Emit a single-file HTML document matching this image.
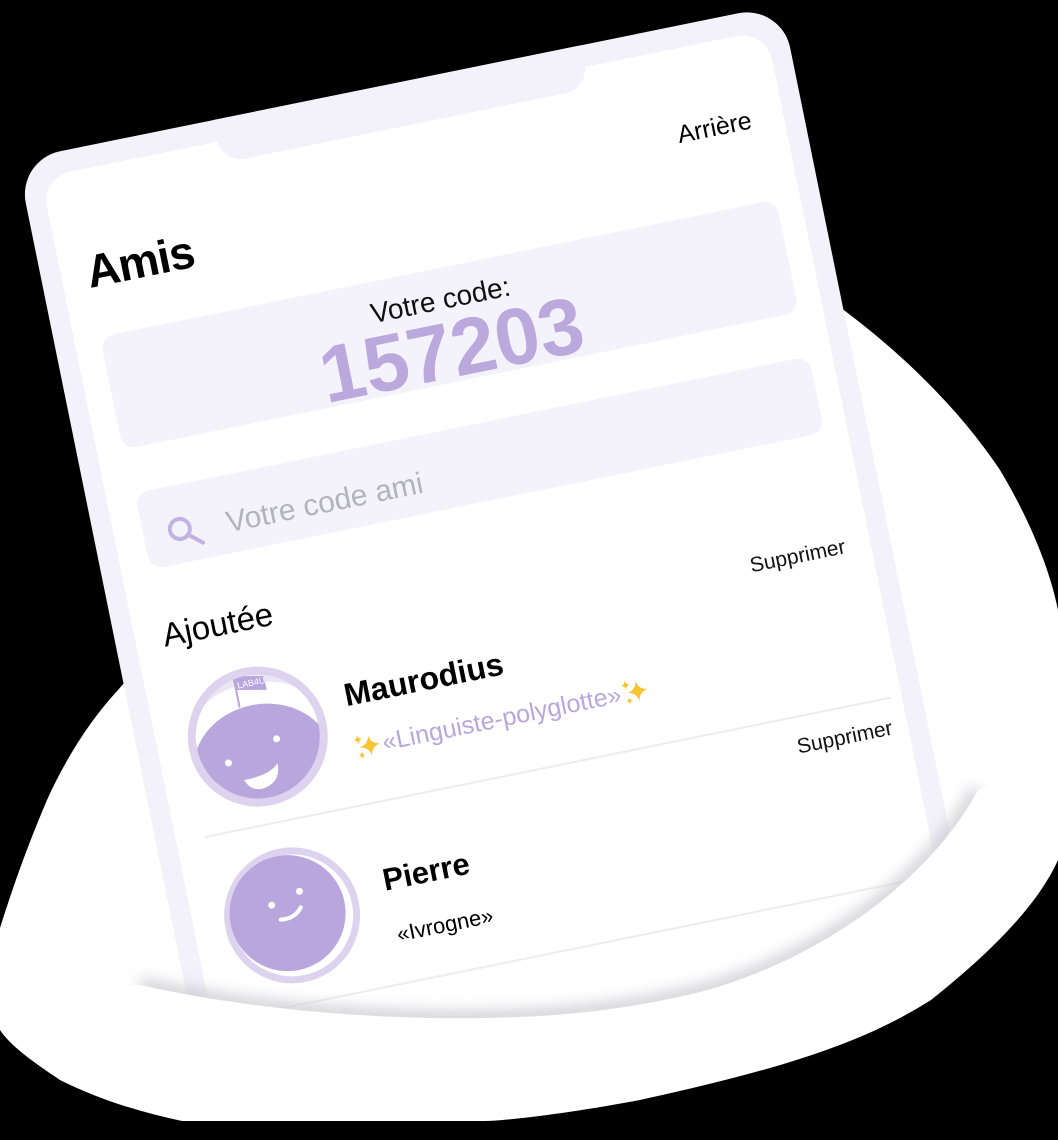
<!DOCTYPE html>
<html><head><meta charset="utf-8">
<style>
html,body{margin:0;padding:0;}
body{width:1058px;height:1121px;background:#000;position:relative;overflow:hidden;font-family:"Liberation Sans",sans-serif;}
#bg{position:absolute;left:0;top:0;}
#clip{position:absolute;left:0;top:0;width:1058px;height:1121px;
 clip-path:path("M0 0 H1058 V760 L978 790 C930 880 820 960 700 992 C600 1016 520 1019 430 1018 C330 1016 230 1005 140 985 L0 985 Z");}
#phone{position:absolute;left:17px;top:160px;width:780px;height:1000px;transform-origin:0 0;transform:rotate(-11.5deg);background:#f3f1fa;border-radius:44px;}
#screen{position:absolute;left:20px;top:22px;width:740px;height:960px;background:#fff;border-radius:30px;}
#notch{position:absolute;left:200px;top:0;width:375px;height:44px;background:#f3f1fa;border-radius:0 0 24px 24px;}
.a{position:absolute;white-space:nowrap;line-height:1;}
.c{transform:translate(-50%,-50%);}
.l{transform:translateY(-50%);}
.box{position:absolute;background:#f4f2fb;border-radius:14px;}
.line{position:absolute;height:1.5px;background:#ececf1;}
</style></head><body>
<svg id="bg" width="1058" height="1121" viewBox="0 0 1058 1121">
<path fill="#fff" d="M300 480 L700 300 L830 300 C900 350 960 410 1000 470 C1030 520 1050 570 1058 610 L1058 860 C1040 900 1000 945 931 1000 C860 1045 776 1070 640 1100 C560 1115 500 1121 486 1121 L182 1121 C140 1112 100 1100 60 1080 C30 1060 10 1045 0 1030 L0 928 C15 880 30 840 47 800 C65 760 90 720 118 690 Z"/>
</svg>
<div id="clip">
<div id="phone">
 <div id="screen"></div>
 <div id="notch"></div>
 <div class="a c" style="left:690px;top:108px;font-size:25px;color:#000;">Arrière</div>
 <div class="a l" style="left:46px;top:124px;font-size:46px;font-weight:900;color:#000;letter-spacing:-1px;">Amis</div>
 <div class="box" style="left:46px;top:190px;width:690px;height:115px;"></div>
 <div class="a c" style="left:387px;top:222px;font-size:28px;color:#111;">Votre code:</div>
 <div class="a c" style="left:388px;top:273px;font-size:80px;font-weight:700;color:#bba9dd;">157203</div>
 <div class="box" style="left:49px;top:350px;width:688px;height:78px;"></div>
 <svg class="a" style="left:70px;top:377px;" width="42" height="42" viewBox="0 0 42 42"><circle cx="16" cy="17" r="10" fill="none" stroke="#c3b3e3" stroke-width="4"/><line x1="24" y1="25" x2="36" y2="35" stroke="#c3b3e3" stroke-width="4" stroke-linecap="round"/></svg>
 <div class="a l" style="left:133px;top:398px;font-size:30px;color:#b3b3ba;">Votre code ami</div>
 <div class="a c" style="left:686px;top:544px;font-size:21px;color:#111;">Supprimer</div>
 <div class="a l" style="left:48px;top:495px;font-size:33px;color:#000;">Ajoutée</div>
 <svg class="a" style="left:51px;top:543px;" width="140" height="140" viewBox="-70 -70 140 140">
  <defs><clipPath id="ci1"><circle r="62"/></clipPath></defs>
  <circle r="70" fill="#ddd3ef"/>
  <circle r="62" fill="#ece6f7"/>
  <g clip-path="url(#ci1)">
   <ellipse cx="0" cy="-14" rx="64" ry="40" fill="#fff"/>
   <ellipse cx="0" cy="28" rx="70" ry="60" fill="#b9a6dc"/>
   <circle cx="-34" cy="20" r="3.5" fill="#fff"/>
   <circle cx="18" cy="6" r="3.5" fill="#fff"/>
   <path d="M-22 40 Q5 40 14 30 Q14 50 -6 52 Q-18 52 -22 40Z" fill="#fff"/>
   <line x1="-12" y1="-32" x2="-12" y2="-66" stroke="#b9a6dc" stroke-width="2"/>
   <path d="M-12 -64 L18 -58 L18 -44 L-12 -50Z" fill="#b9a6dc"/>
   <text x="-10" y="-51" font-size="9" fill="#fff" font-family="Liberation Sans">LAB4U</text>
  </g>
 </svg>
 <div class="a l" style="left:214px;top:590px;font-size:32px;font-weight:700;color:#000;">Maurodius</div>
 <div class="a l" style="left:212px;top:644px;font-size:25px;color:#b9a6dc;display:flex;align-items:center;">
  <svg width="30" height="30" viewBox="0 0 28 28"><path d="M16 4 Q17 13 26 14 Q17 15 16 24 Q15 15 6 14 Q15 13 16 4Z" fill="#f7c531"/><path d="M6 2 Q6.5 6 10 6.5 Q6.5 7 6 11 Q5.5 7 2 6.5 Q5.5 6 6 2Z" fill="#f7c531"/><path d="M7 18 Q7.5 21 10 21.5 Q7.5 22 7 25 Q6.5 22 4 21.5 Q6.5 21 7 18Z" fill="#f7c531"/></svg>«Linguiste-polyglotte»<svg width="30" height="30" viewBox="0 0 28 28"><path d="M16 4 Q17 13 26 14 Q17 15 16 24 Q15 15 6 14 Q15 13 16 4Z" fill="#f7c531"/><path d="M6 2 Q6.5 6 10 6.5 Q6.5 7 6 11 Q5.5 7 2 6.5 Q5.5 6 6 2Z" fill="#f7c531"/><path d="M7 18 Q7.5 21 10 21.5 Q7.5 22 7 25 Q6.5 22 4 21.5 Q6.5 21 7 18Z" fill="#f7c531"/></svg>
 </div>
 <div class="line" style="left:49px;top:700px;width:700px;"></div>
 <div class="a c" style="left:696px;top:731px;font-size:21px;color:#111;">Supprimer</div>
 <svg class="a" style="left:51px;top:727px;" width="136" height="136" viewBox="-68 -68 136 136">
  <circle r="68" fill="#ddd3ef"/>
  <circle r="61" fill="#fff"/>
  <circle cx="-4" cy="-3" r="58" fill="#b9a6dc"/>
  <circle cx="-18" cy="-14" r="3.5" fill="#fff"/>
  <circle cx="12" cy="-22" r="3.5" fill="#fff"/>
  <path d="M-12 2 Q2 4 10 -6" fill="none" stroke="#fff" stroke-width="4" stroke-linecap="round"/>
 </svg>
 <div class="a l" style="left:215px;top:779px;font-size:31px;font-weight:700;color:#000;">Pierre</div>
 <div class="a l" style="left:218px;top:835px;font-size:22px;color:#000;">«Ivrogne»</div>
 <div class="line" style="left:49px;top:883px;width:700px;"></div>
</div>
<svg class="a" style="left:0;top:0;" width="1058" height="1121" viewBox="0 0 1058 1121">
 <defs><filter id="bl"><feGaussianBlur stdDeviation="7"/></filter></defs>
 <path d="M978 790 C930 880 820 960 700 992 C600 1016 520 1019 430 1018 C330 1016 230 1005 140 985" fill="none" stroke="#c9c9cf" stroke-width="16" filter="url(#bl)" opacity="0.8"/>
</svg>
</div>
</body></html>
